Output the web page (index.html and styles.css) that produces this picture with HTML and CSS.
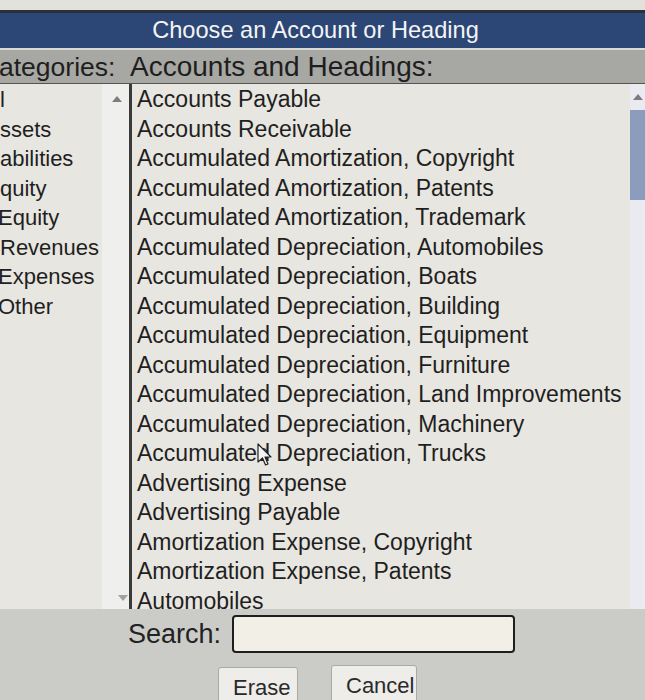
FILE: index.html
```html
<!DOCTYPE html>
<html lang="en">
<head>
    <meta charset="UTF-8">
    <title>Choose an Account or Heading</title>
    <link rel="stylesheet" href="styles.css">
</head>
<body>
    <div class="dialog">
        <div class="titlebar">Choose an Account or Heading</div>
        <div class="labels">
            <span class="lbl-cat">ategories:</span>
            <span class="lbl-acc">Accounts and Headings:</span>
        </div>

        <div class="lists">
            <div class="cat-pane">
                <ul class="cat-list">
                    <li>l</li>
                    <li>ssets</li>
                    <li>abilities</li>
                    <li>quity</li>
                    <li class="cut">Equity</li>
                    <li>Revenues</li>
                    <li class="cut">Expenses</li>
                    <li class="cut">Other</li>
                </ul>
                <div class="cat-scroll">
                    <span class="arrow-up"></span>
                    <span class="arrow-down"></span>
                </div>
            </div>

            <div class="acc-pane">
                <ul class="acc-list">
                    <li>Accounts Payable</li>
                    <li>Accounts Receivable</li>
                    <li>Accumulated Amortization, Copyright</li>
                    <li>Accumulated Amortization, Patents</li>
                    <li>Accumulated Amortization, Trademark</li>
                    <li>Accumulated Depreciation, Automobiles</li>
                    <li>Accumulated Depreciation, Boats</li>
                    <li>Accumulated Depreciation, Building</li>
                    <li>Accumulated Depreciation, Equipment</li>
                    <li>Accumulated Depreciation, Furniture</li>
                    <li>Accumulated Depreciation, Land Improvements</li>
                    <li>Accumulated Depreciation, Machinery</li>
                    <li>Accumulated Depreciation, Trucks</li>
                    <li>Advertising Expense</li>
                    <li>Advertising Payable</li>
                    <li>Amortization Expense, Copyright</li>
                    <li>Amortization Expense, Patents</li>
                    <li>Automobiles</li>
                </ul>
                <div class="acc-scroll">
                    <span class="arrow-up"></span>
                    <div class="thumb"></div>
                </div>
            </div>
        </div>

        <div class="search-row">
            <label for="search">Search:</label>
            <input type="text" id="search">
        </div>
        <div class="buttons">
            <button type="button" class="btn-erase">Erase</button>
            <button type="button" class="btn-cancel">Cancel</button>
        </div>

        <!-- mouse pointer sitting over the list -->
        <svg class="cursor" width="16" height="24" viewBox="0 0 16 24">
            <path d="M1 1 L1 19 L5.5 15 L8.5 22 L11 21 L8 14 L14 14 Z" fill="#f4f4f4" stroke="#222" stroke-width="1.2" stroke-linejoin="round"/>
        </svg>
    </div>
</body>
</html>
```

FILE: styles.css
```css
body {
    margin: 0;
    padding: 0;
    background-color: #e3e1db;
    font-family: "Liberation Sans", Arial, sans-serif;
    overflow: hidden;
}

.dialog {
    position: relative;
    width: 645px;
    height: 700px;
    padding-top: 10px;
    box-sizing: border-box;
    background-color: #cbcbc8;
    border-top: 10px solid #e3e1db;
    overflow: hidden;
}

.titlebar {
    margin-top: -10px;
    height: 35px;
    border-top: 3px solid #2b2f38;
    background-color: #2c4676;
    color: #f4f4f4;
    font-size: 23.6px;
    line-height: 35px;
    text-align: center;
    padding-right: 14px;
}

.labels {
    height: 33px;
    border-top: 2px solid #d9d9d6;
    background-color: #a7a7a3;
    color: #1e1e1e;
    font-size: 28px;
    line-height: 34px;
    display: flex;
    white-space: nowrap;
}

.lbl-cat {
    width: 131px;
    flex-shrink: 0;
    font-size: 26.5px;
    margin-left: -1px;
}

.lists {
    display: flex;
    height: 525px;
    border-top: 1px solid #55554f;
    background-color: #e8e6e0;
}

.cat-pane {
    display: flex;
    width: 129px;
}

.cat-list, .acc-list {
    list-style: none;
    margin: 0;
    padding: 0;
    font-size: 23px;
    line-height: 29.5px;
    color: #1f1f1f;
    white-space: nowrap;
    overflow: hidden;
}

.cat-list {
    width: 102px;
    padding-top: 1px;
    font-size: 22px;
}

.cat-list .cut {
    margin-left: -2px;
}

.cat-scroll {
    position: relative;
    width: 27px;
    background-color: #efefee;
}

.arrow-up, .arrow-down {
    position: absolute;
    width: 0;
    height: 0;
    border-left: 5px solid transparent;
    border-right: 5px solid transparent;
}

.arrow-up {
    top: 12px;
    left: 10px;
    border-bottom: 6px solid #7d7d7d;
}

.arrow-down {
    bottom: 8px;
    left: 16px;
    border-top: 6px solid #a0a0a8;
}

.acc-pane {
    display: flex;
    flex: 1;
    border-left: 3px solid #3a3a38;
}

.acc-list {
    flex: 1;
    padding-left: 5px;
    padding-top: 1px;
}

.acc-scroll {
    position: relative;
    width: 15px;
    background-color: #e9ebf0;
}

.acc-scroll .arrow-up {
    top: 10px;
    left: 3px;
}

.thumb {
    margin-top: 26px;
    height: 90px;
    background-color: #8c9cbd;
}

.search-row {
    display: flex;
    align-items: center;
    height: 50px;
    padding-left: 128px;
    font-size: 27px;
    color: #222;
}

.search-row label {
    margin-right: 11px;
}

.search-row input {
    width: 279px;
    height: 34px;
    border: 2px solid #1e1e1e;
    border-radius: 4px;
    background-color: #f2efe6;
    margin: 0;
    padding: 0;
}

.buttons {
    display: flex;
    gap: 33px;
    padding-left: 218px;
    padding-top: 6px;
}

.buttons button {
    height: 42px;
    padding: 0 14px;
    background-color: #eeede9;
    border: 1px solid #a9a9a6;
    border-radius: 3px;
    font-family: "Liberation Sans", Arial, sans-serif;
    font-size: 22px;
    color: #2a2a2a;
    line-height: 36px;
    align-self: flex-start;
}

.btn-erase {
    width: 80px;
    margin-top: 2px;
}

.btn-cancel {
    width: 86px;
}

.cursor {
    position: absolute;
    left: 257px;
    top: 433px;
}
```
